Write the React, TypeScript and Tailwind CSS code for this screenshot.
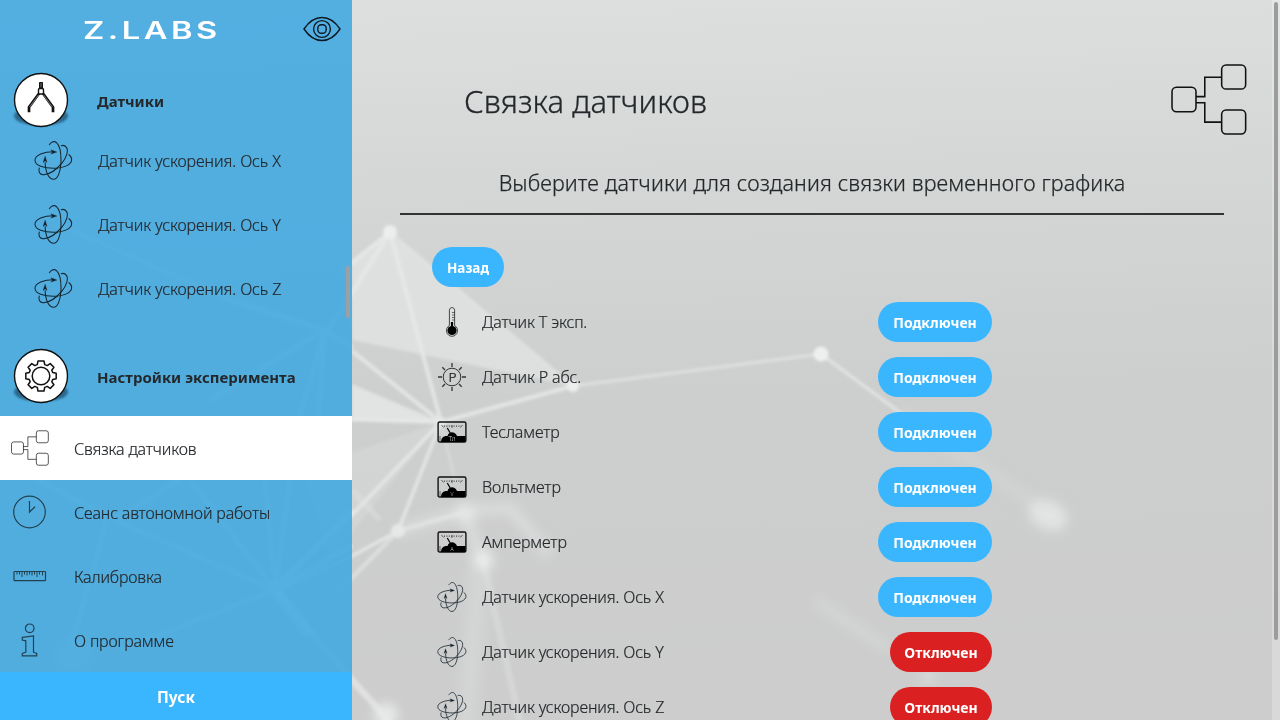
import type { ReactNode } from "react";

function Backdrop() {
  return (
    <svg className="absolute inset-0 h-full w-full" viewBox="0 0 1280 720" fill="none" aria-hidden="true">
      <defs>
        <linearGradient id="base" x1="0.45" y1="0" x2="0.5" y2="1">
          <stop offset="0" stopColor="#dddfde" />
          <stop offset="0.28" stopColor="#d4d6d5" />
          <stop offset="0.55" stopColor="#cdcfce" />
          <stop offset="1" stopColor="#cccdcc" />
        </linearGradient>
        <filter id="soft" x="-10%" y="-10%" width="120%" height="120%"><feGaussianBlur stdDeviation="1.5" /></filter>
        <filter id="haze" x="-50%" y="-50%" width="200%" height="200%"><feGaussianBlur stdDeviation="6" /></filter>
      </defs>
      <rect width="1280" height="720" fill="url(#base)" />
      <g filter="url(#soft)">
        <path d="M390 232 573 386 352 340V262Z" fill="#e2e4e3" opacity=".75" />
        <path d="M352 384 441 422 352 420Z" fill="#e6e8e7" opacity=".8" />
        <path d="M441 422 330 560 300 470Z" fill="#d6d8d7" opacity=".6" />
        <g stroke="#e8eae9" strokeWidth="4" opacity=".85">
          <path d="M390 232 441 422M390 232 326 334M390 232 340 272M573 386 441 422 352 351M441 422 300 418" />
          <path d="M441 422 398 531M441 422 352 515 270 590M398 531 352 556 275 592" strokeWidth="3.5" />
          <path d="M398 531 465 512M398 531 330 600" strokeWidth="4" opacity=".7" />
          <path d="M275 590 352 680 390 722" strokeWidth="7" opacity=".8" />
        </g>
        <g stroke="#e2e4e3" strokeWidth="3">
          <path d="M390 232 573 386" opacity=".6" />
          <path d="M573 386 821 354" opacity=".85" />
          <path d="M821 354 910 420" />
          <path d="M441 422 455 480" opacity=".5" />
          <path d="M483 560 520 722" strokeWidth="7" opacity=".4" />
          <path d="M352 490 380 520" strokeWidth="6" opacity=".4" />
        </g>
        <circle cx="390" cy="232" r="7" fill="#eceeed" />
        <circle cx="441" cy="422" r="5" fill="#e6e8e7" />
        <circle cx="573" cy="386" r="6" fill="#eceeed" />
        <circle cx="821" cy="354" r="7.5" fill="#eef0ef" />
        <circle cx="398" cy="531" r="7" fill="#e6e8e7" />
        <g stroke="#fff" strokeWidth="5" opacity=".5">
          <path d="M325 330 210 400M325 330 230 300 60 225M325 330 300 416M325 330 352 348M325 330 318 420" />
          <path d="M20 470 115 520 240 575 275 590M115 520 180 480M275 590 265 480M275 590 290 480M275 590 352 510M275 590 352 545M275 590 190 480M275 590 120 650M110 510 70 650" />
          <path d="M275 590 310 635" strokeWidth="12" />
        </g>
      </g>
      <g filter="url(#haze)">
        <path d="M398 531 465 511 510 508 550 555M465 515 483 560" stroke="#e6e8e7" strokeWidth="10" opacity=".6" />
        <circle cx="465" cy="513" r="10" fill="#e6e8e7" />
        <circle cx="483" cy="560" r="10" fill="#eceeed" />
        <path d="M480 570 465 730" stroke="#dfe1e0" strokeWidth="22" opacity=".4" />
        <path d="M900 412 1048 512" stroke="#d9dbda" strokeWidth="10" opacity=".45" />
        <ellipse cx="1048" cy="515" rx="20" ry="14" transform="rotate(25 1048 515)" fill="#e2e4e3" />
        <path d="M815 600 890 650" stroke="#dadcdb" strokeWidth="8" opacity=".8" />
        <circle cx="928" cy="677" r="7" fill="#dcdedd" />
        <circle cx="386" cy="715" r="12" fill="#e8eae9" />
        <circle cx="75" cy="655" r="20" fill="#e8eae9" opacity=".7" />
      </g>
    </svg>
  );
}

function AxisIcon({ className }: { className: string }) {
  return (
    <svg className={className} viewBox="-1 -1 114 116" fill="none" stroke="#16262e" strokeWidth="3.1">
      <path d="M55 31C28 31 1 41 1 56C1 72 28 80 56 80C86 80 110 70 110 54C110 49 107 43 101 39" />
      <path d="M43 11C50 1 58-2 65 4C76 14 79 42 78 64C77 90 69 113 56 113C42 113 32 92 31 62" />
      <path d="M14 78C11 88 13 98 24 99C42 101 65 84 81 65C94 49 102 27 94 17C90 12 84 11 78 13" />
      <path d="M66 32 48 25 53 32 48 38ZM31 44 25 63 31 58 37 63Z" fill="#111c22" strokeWidth="1" />
    </svg>
  );
}

function LinkIcon({ className }: { className: string }) {
  return (
    <svg className={className} viewBox="274 193 225 210" fill="none" stroke="currentColor" strokeWidth="4.6">
      <rect x="277" y="262" width="71" height="72" rx="13" />
      <rect x="424" y="196" width="71" height="71" rx="13" />
      <rect x="424" y="329" width="71" height="71" rx="13" />
      <path d="M348 289.500H374V232H424M348 307.500H374V365H424" />
    </svg>
  );
}

function EyeIcon() {
  return (
    <svg className="h-[26px] w-[38px]" viewBox="0 0 38 26" fill="none" stroke="#0b1a22" strokeWidth="1.4">
      <path d="M1 13C6 5.500 12 1.500 19 1.500S32 5.500 37 13C32 20.500 26 24.500 19 24.500S6 20.500 1 13Z" />
      <circle cx="19" cy="13" r="8.400" />
      <rect x="14.800" y="8.800" width="8.400" height="8.400" rx="3.500" />
    </svg>
  );
}

function Badge({ children }: { children: ReactNode }) {
  return (
    <svg className="h-[60px] w-[60px] shrink-0" viewBox="0 0 60 60" fill="none" stroke="#111">
      <defs>
        <filter id="drop" x="-20%" y="-40%" width="140%" height="180%"><feGaussianBlur stdDeviation="1.2" /></filter>
      </defs>
      <ellipse cx="30" cy="46" rx="27" ry="9.500" fill="#14425f" stroke="none" opacity=".65" filter="url(#drop)" />
      <circle cx="30" cy="30" r="26.500" fill="#fff" strokeWidth="1.400" />
      {children}
    </svg>
  );
}

function Compass() {
  return (
    <g>
      <path d="M28.500 12.500H31.500V18H28.500Z" fill="#444" strokeWidth="1" />
      <rect x="27.500" y="18.500" width="5" height="5.500" rx="1.200" fill="#fff" strokeWidth="1.400" />
      <path d="M28 23.500 18 37.200V42.200M32 23.500 42 37.200V42.200" strokeWidth="2.700" />
      <path d="M27.500 25 18.600 37M32.500 25 41.400 37" stroke="#bbb" strokeWidth=".6" />
    </g>
  );
}

function Gear() {
  return (
    <g strokeWidth="1.500" strokeLinejoin="round">
      <path d="M27 15H33L33.700 18.600 36.200 19.600 39.200 17.600 42.900 21.200 40.800 24.200 41.700 26.500 45.200 27.200V32.800L41.700 33.500 40.800 35.800 42.900 38.800 39.200 42.400 36.200 40.400 33.700 41.400 33 45H27L26.300 41.400 23.800 40.400 20.800 42.400 17.100 38.800 19.200 35.800 18.300 33.500 14.800 32.800V27.200L18.300 26.500 19.200 24.200 17.100 21.200 20.800 17.600 23.800 19.600 26.300 18.600Z" />
      <circle cx="30" cy="30" r="8.800" />
    </g>
  );
}

function ClockIcon() {
  return (
    <svg className="h-[34px] w-[34px]" viewBox="0 0 34 34" fill="none" stroke="#214250" strokeWidth="1.200">
      <circle cx="16.500" cy="17" r="15.800" />
      <path d="M16.500 6V17L22 11.800" />
    </svg>
  );
}

function RulerIcon() {
  return (
    <svg className="h-[34px] w-[34px]" viewBox="0 0 34 34" fill="none" stroke="#214250" strokeWidth="1.200">
      <rect x="1" y="12.500" width="31.500" height="9.200" rx=".8" />
      <path d="M4 13V15.500M6.500 13V15.500M9 13V18M11.500 13V15.500M14 13V16.500M16.500 13V15.500M19 13V16.500M21.500 13V15.500M24 13V18M26.500 13V15.500M29.500 13V16.500" strokeWidth="1" />
    </svg>
  );
}

function InfoIcon() {
  return (
    <svg className="h-[34px] w-[34px]" viewBox="0 0 34 34" fill="none" stroke="#214250" strokeWidth="1.200">
      <circle cx="16.700" cy="5.300" r="4.300" />
      <path d="M9.300 14.300 20.500 13V29.200L23.700 30.500V32.800H9.300V30.500L12.800 29.200V17.800L9.300 17Z" />
    </svg>
  );
}

function ThermometerIcon() {
  return (
    <svg className="h-[30px] w-[30px]" viewBox="0 0 30 30" fill="none" stroke="#333" strokeWidth=".9">
      <path d="M12.400 18.500V3.200C12.400-.2 17.600-.2 17.600 3.200V18.500C22.600 21.300 20.800 29.300 15 29.300S7.400 21.300 12.400 18.500Z" />
      <circle cx="15" cy="23.500" r="4.600" fill="#000" stroke="none" />
      <path d="M15 22V15" stroke="#000" strokeWidth="2.200" />
      <path d="M15 5.500H17.500M15 8H17.500M15 10.500H17.500M15 13H17.500" strokeWidth=".7" />
    </svg>
  );
}

function PressureIcon() {
  return (
    <svg className="h-[30px] w-[30px]" viewBox="0 0 30 30" fill="none" stroke="#333" strokeWidth="1">
      <circle cx="15" cy="15" r="8.800" />
      <path d="M15 1V5M15 25V29M1 15H5M25 15H29M5.300 5.300 8 8M24.700 5.300 22 8M5.300 24.700 8 22M24.700 24.700 22 22" strokeWidth="1.300" />
      <text x="15.500" y="19.800" textAnchor="middle" fill="#111" stroke="#111" strokeWidth=".2" fontFamily="Noto Sans, sans-serif" fontSize="13.500" fontWeight="300">P</text>
    </svg>
  );
}

function MeterIcon({ unit }: { unit: string }) {
  return (
    <svg className="h-[30px] w-[30px]" viewBox="0 0 30 30" fill="none">
      <rect x="1.100" y="5" width="27.800" height="20" rx="1.600" stroke="#111" strokeWidth="1.400" />
      <path d="M2 19H4V24H2Z" fill="#999" />
      <path d="M4 25C4 22 5.500 19.500 8.500 19H10.500C12 14 18 14 20 19H28.500V25Z" fill="#000" />
      <path d="M13.500 16.500 10.300 11" stroke="#000" strokeWidth="1.200" />
      <path d="M7 9.200H24" stroke="#444" strokeWidth="1.300" strokeDasharray="1 1.400" />
      <path d="M4.500 8 6.500 10.500M25.500 8 23.500 10.500M15 8V11" stroke="#333" strokeWidth=".7" />
      <text x="15" y="23.500" textAnchor="middle" fill="#d8d8d8" fontFamily="Noto Sans, sans-serif" fontSize={unit.length > 1 ? 6.5 : 5} fontWeight="300">{unit}</text>
    </svg>
  );
}

const axes = ["X", "Y", "Z"];

const settings: { label: string; icon: ReactNode; active?: boolean }[] = [
  { label: "Связка датчиков", icon: <LinkIcon className="h-9 w-[38px]" />, active: true },
  { label: "Сеанс автономной работы", icon: <ClockIcon /> },
  { label: "Калибровка", icon: <RulerIcon /> },
  { label: "О программе", icon: <InfoIcon /> },
];

const sensors: { label: string; icon: ReactNode; on: boolean }[] = [
  { label: "Датчик T эксп.", icon: <ThermometerIcon />, on: true },
  { label: "Датчик P абс.", icon: <PressureIcon />, on: true },
  { label: "Тесламетр", icon: <MeterIcon unit="Тл" />, on: true },
  { label: "Вольтметр", icon: <MeterIcon unit="V" />, on: true },
  { label: "Амперметр", icon: <MeterIcon unit="A" />, on: true },
  { label: "Датчик ускорения. Ось X", icon: <AxisIcon className="h-[30px] w-[30px]" />, on: true },
  { label: "Датчик ускорения. Ось Y", icon: <AxisIcon className="h-[30px] w-[30px]" />, on: false },
  { label: "Датчик ускорения. Ось Z", icon: <AxisIcon className="h-[30px] w-[30px]" />, on: false },
];

function Sidebar() {
  return (
    <aside className="relative flex h-full w-[352px] shrink-0 flex-col bg-[#42a8e1]/89">
      <header className="flex h-[72px] items-start justify-between pt-4 pr-[11px] pl-[83px]">
        <div className="mt-px origin-left scale-x-[1.36] font-['Inter'] text-2xl leading-7 font-semibold tracking-[2.6px] text-white">Z.LABS</div>
        <EyeIcon />
      </header>
      <div className="flex h-14 items-center pl-[11px]">
        <Badge><Compass /></Badge>
        <span className="mt-0.5 ml-[26px] text-[15px] font-bold">Датчики</span>
      </div>
      {axes.map((axis) => (
        <div key={axis} className="flex h-16 items-center pl-[34px]">
          <AxisIcon className="h-[39px] w-[39px]" />
          <span className="mt-0.5 ml-[25px] tracking-[-0.08px] [-webkit-text-stroke:0.2px]">Датчик ускорения. Ось {axis}</span>
        </div>
      ))}
      <div className="flex h-24 items-center pt-4 pl-[11px]">
        <Badge><Gear /></Badge>
        <span className="mt-0.5 ml-[26px] text-[15px] font-bold">Настройки эксперимента</span>
      </div>
      {settings.map(({ label, icon, active }) => (
        <div key={label} className={`flex h-16 items-center ${active ? "bg-white" : ""}`}>
          <div className="flex w-[74px] justify-center pr-[15px]">{icon}</div>
          <span className="mt-0.5 tracking-[-0.16px] [-webkit-text-stroke:0.2px]">{label}</span>
        </div>
      ))}
      <button className="h-12 bg-[#3ab6ff] pt-1 text-[15.5px] font-bold text-white">Пуск</button>
      <div className="absolute top-[266px] right-[2px] h-[52px] w-1 rounded-sm bg-[#9d9fa1]" />
    </aside>
  );
}

export default function App() {
  return (
    <div className="relative h-[720px] w-[1280px] overflow-hidden font-['Noto_Sans',sans-serif] text-base font-light text-[#24282b]">
      <Backdrop />
      <div className="relative flex h-full">
        <Sidebar />
        <main className="flex min-w-0 flex-1 flex-col overflow-hidden pr-2 pl-12">
          <div className="flex h-[155px] shrink-0 items-start justify-between pr-[25px] pl-16">
            <h1 className="pt-[79px] text-[31px] leading-[44px] tracking-[0.1px] [-webkit-text-stroke:0.3px]">Связка датчиков</h1>
            <LinkIcon className="mt-16 h-[71px] w-[76px] text-[#111]" />
          </div>
          <h2 className="mr-12 h-[60px] shrink-0 border-b-2 border-[#333] pt-3 text-center text-[21.5px] leading-8 tracking-[0.12px] [-webkit-text-stroke:0.25px]">
            Выберите датчики для создания связки временного графика
          </h2>
          <div className="w-[592px] shrink-0 pt-8 pl-8">
            <button className="block h-10 w-[72px] rounded-[20px] bg-[#3ab6ff] pt-[3px] text-[13.5px] font-bold text-white">Назад</button>
            <div className="pt-[7px]">
              {sensors.map(({ label, icon, on }) => (
                <div key={label} className="flex h-[55px] items-center">
                  <div className="ml-[5px] w-[45px]">{icon}</div>
                  <span className="flex-1 tracking-[-0.13px] [-webkit-text-stroke:0.2px]">{label}</span>
                  <button className={`h-10 rounded-[20px] pt-[3px] text-sm font-bold text-white ${on ? "w-[114px] bg-[#3ab6ff]" : "w-[102px] bg-[#da2020]"}`}>
                    {on ? "Подключен" : "Отключен"}
                  </button>
                </div>
              ))}
            </div>
          </div>
        </main>
        <div className="absolute inset-y-0 right-0 w-2 bg-white/25 pt-0.5 pl-0.5">
          <div className="h-[638px] w-1 rounded-sm bg-[#9c9c9c]" />
        </div>
      </div>
    </div>
  );
}
